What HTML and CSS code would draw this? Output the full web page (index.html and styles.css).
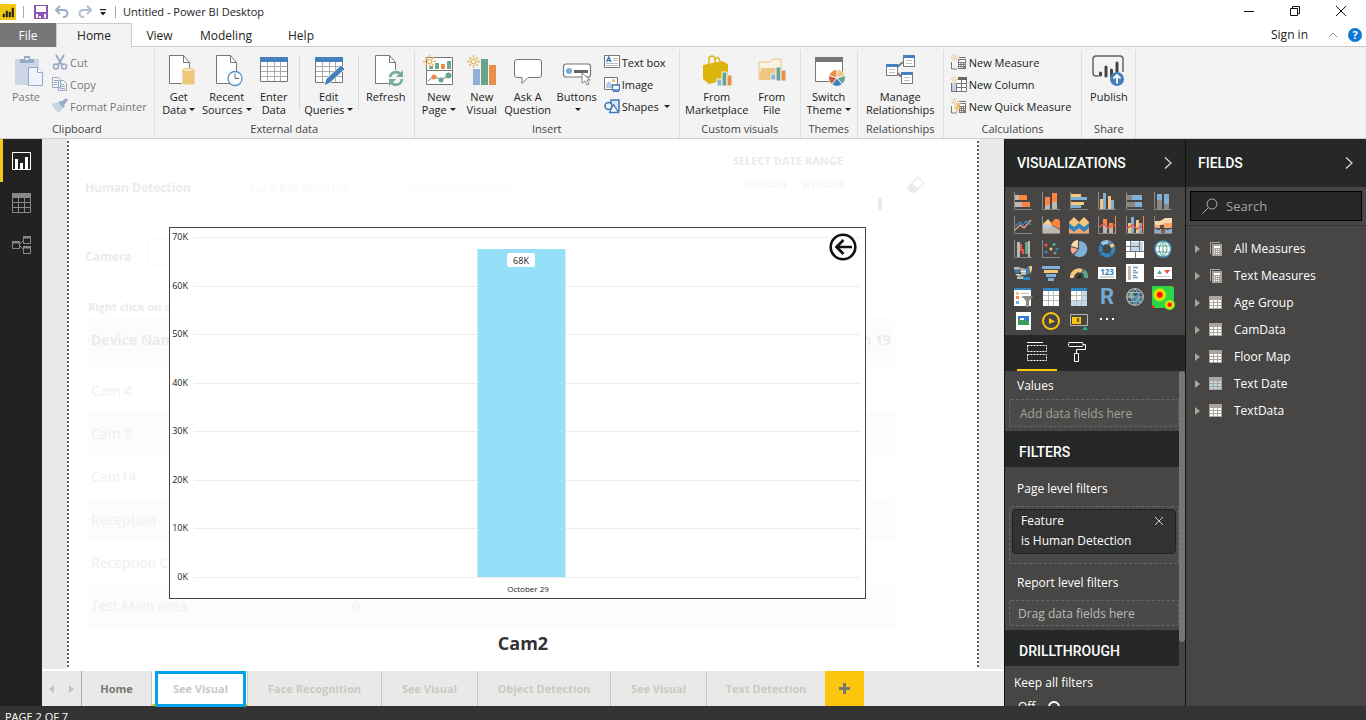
FILE: index.html
```html
<!DOCTYPE html>
<html lang="en">
<head>
<meta charset="utf-8">
<title>Untitled - Power BI Desktop</title>
<link rel="stylesheet" href="styles.css">
</head>
<body>
<svg class="defs" aria-hidden="true">
  <symbol id="spark" viewBox="0 0 12 12"><path d="M6 0v3M6 9v3M0 6h3M9 6h3M2 2l2 2M8 8l2 2M10 2L8 4M4 8l-2 2" stroke="#e8b96a" stroke-width="1.3"/><circle cx="6" cy="6" r="2" fill="#fff" stroke="#e8b96a" stroke-width="1.2"/></symbol>
  <symbol id="page" viewBox="0 0 22 30"><path d="M.5.5h14l6 7v21h-20z" fill="#fff" stroke="#777"/><path d="M14.500.5v7h6" fill="none" stroke="#777"/></symbol>
  <symbol id="f-table" viewBox="0 0 13 13"><path d="M0 0h13v13H0z" fill="#a9a59e"/><path d="M1 4h3v2H1zM5 4h3v2H5zM9 4h3v2H9zM1 7h3v2H1zM5 7h3v2H5zM9 7h3v2H9zM1 10h3v2H1zM5 10h3v2H5zM9 10h3v2H9z" fill="currentColor"/></symbol>
  <symbol id="f-calc" viewBox="0 0 13 15"><path d="M1.500 13V1.500H11" fill="none" stroke="#a9a59e"/><path d="M3 3h10v12H3z" fill="#a9a59e"/><path d="M5 5h6v2H5zM5 8h1v1H5zM7 8h1v1H7zM9 8h1v1H9zM5 10h1v1H5zM7 10h1v1H7zM9 10h1v1H9zM5 12h1v1H5zM7 12h1v1H7zM9 12h1v1H9z" fill="#fff"/></symbol>
  <symbol id="chev" viewBox="0 0 8 12"><path d="M1 .5l6 5.500-6 5.500" fill="none" stroke="#ddd" stroke-width="1.200"/></symbol>
</svg>
<div class="app">
  <header class="titlebar">
    <svg class="logo" width="16" height="16" viewBox="0 0 16 16"><path d="M0 0h16v16H0z" fill="#f2c811"/><path d="M3 13v-3h1.500v3zM6 13V7h1.500v6zM9 13V8h1.500v5zM12 13V4h1.500v9z" fill="#222" stroke="#222" stroke-width=".6"/></svg>
    <span class="tdiv"></span>
    <button class="plain save" aria-label="Save"><svg width="14" height="14" viewBox="0 0 14 14"><path d="M0 0h14v14H0z" fill="#8e56b0"/><path d="M2 1h10v6H2zM2 9h10v4H2z" fill="#fff"/><path d="M4 9h6v5H4z" fill="#8e56b0"/><path d="M5 11h2v2H5z" fill="#fff"/></svg></button>
    <button class="plain undo" aria-label="Undo"><svg width="15" height="13" viewBox="0 0 15 13"><path d="M1 5h8a3.500 3.500 0 0 1 0 7H8M5 .8L1 5l4 4" fill="none" stroke="#9ab0ca" stroke-width="2"/></svg></button>
    <button class="plain redo" aria-label="Redo"><svg width="15" height="13" viewBox="0 0 15 13"><path d="M14 5H6a3.500 3.500 0 0 0 0 7h1M10 .8L14 5l-4 4" fill="none" stroke="#afbfd3" stroke-width="2"/></svg></button>
    <button class="plain more" aria-label="Customize toolbar"><svg width="8" height="8" viewBox="0 0 8 8"><path d="M1 1h6v1.300H1zM1 4h6L4 7.500z" fill="#222"/></svg></button>
    <span class="tdiv"></span>
    <h1 class="doc">Untitled - Power BI Desktop</h1>
    <div class="win">
      <button class="plain" aria-label="Minimize"><svg width="12" height="12" viewBox="0 0 12 12"><path d="M1 6.500h10" stroke="#111"/></svg></button>
      <button class="plain" aria-label="Restore"><svg width="12" height="12" viewBox="0 0 12 12"><path d="M1.500 3.500h7v7h-7zM3.500 3V1.500h7v7H9" fill="none" stroke="#111"/></svg></button>
      <button class="plain" aria-label="Close"><svg width="12" height="12" viewBox="0 0 12 12"><path d="M1 1l10 10M11 1L1 11" stroke="#111"/></svg></button>
    </div>
  </header>

  <nav class="menu">
    <button class="mtab file">File</button>
    <button class="mtab home">Home</button>
    <button class="mtab view">View</button>
    <button class="mtab modeling">Modeling</button>
    <button class="mtab help">Help</button>
    <div class="account">
      <a class="signin" href="#">Sign in</a>
      <svg width="10" height="6" viewBox="0 0 10 6"><path d="M1 5l4-4 4 4" fill="none" stroke="#888"/></svg>
      <button class="helpbtn" aria-label="Help topics">?</button>
    </div>
  </nav>

  <div class="ribbon">
    <section class="group">
      <div class="tools clip">
        <button class="big w-paste dim"><svg width="30" height="32" viewBox="-3 0 30 32"><path d="M1 4h24v26H1z" fill="#ccd6e6"/><path d="M6 4h4V1h6v3h4v4H6z" fill="#97a9c4"/><path d="M11.500 3h3v2h-3z" fill="#f3f3f3"/><path d="M14.500 12.500h9l5 5v13h-14z" fill="#eef4fc" stroke="#97a9c4"/><path d="M23.500 12.500v5h5" fill="#fff" stroke="#97a9c4"/></svg><span>Paste</span></button>
        <div class="smalls">
          <button class="small dim"><svg width="16" height="16" viewBox="0 0 16 16"><path d="M4 1l6 10M12 1L6 11" stroke="#97a9c4" stroke-width="2"/><circle cx="4" cy="12.500" r="2.500" fill="none" stroke="#97a9c4" stroke-width="1.500"/><circle cx="12" cy="12.500" r="2.500" fill="none" stroke="#97a9c4" stroke-width="1.500"/></svg>Cut</button>
          <button class="small dim"><svg width="16" height="16" viewBox="0 0 16 16"><path d="M.5 1.500h6l2 2v8h-8zM6.500 4.500h5l3 3v7h-8z" fill="#f3f3f3" stroke="#97a9c4"/><path d="M2 4.500h4M2 6.500h3M2 8.500h3M8 8.500h4M8 10.500h5M8 12.500h5" stroke="#97a9c4"/></svg>Copy</button>
          <button class="small dim"><svg width="16" height="16" viewBox="0 0 16 16"><path d="M0 6l6-2 5 6-4 5c-2-1-6-5-7-9z" fill="#c8d3e3"/><path d="M6 4l3-1 4 5-2 2z" fill="#97a9c4"/><path d="M9 4l5-4 2 2-4 5z" fill="#97a9c4"/></svg>Format Painter</button>
        </div>
      </div>
      <h2>Clipboard</h2>
    </section>
    <section class="group">
      <div class="tools external">
        <button class="big w48"><svg width="30" height="32" viewBox="-2 0 30 32"><use href="#page" x="3" y="0" width="22" height="30"/><path d="M16 14h13v16H16z" fill="#efc77c" stroke="#f3f3f3"/><ellipse cx="22.500" cy="15" rx="5.500" ry="1.800" fill="#f8e6c0" stroke="#e8b45c" stroke-width=".7"/></svg><span>Get<br>Data<i></i></span></button>
        <button class="big w48"><svg width="30" height="32" viewBox="-1 0 30 32"><use href="#page" x="3" y="0" width="22" height="30"/><circle cx="22" cy="23.500" r="7" fill="#fff" stroke="#5d8fc0" stroke-width="1.300"/><path d="M22 18.500v5h4" fill="none" stroke="#666"/></svg><span>Recent<br>Sources<i></i></span></button>
        <button class="big w46"><svg width="30" height="32" viewBox="0 0 30 32"><path d="M1.500 2.500h27v24h-27z" fill="#fff" stroke="#777"/><path d="M1 2h28v5H1z" fill="#4580bd"/><path d="M2 11.500h26M2 16.500h26M2 21.500h26M8.500 7v19M15.500 7v19M21.500 7v19" stroke="#aaa"/></svg><span>Enter<br>Data</span></button>
        <span class="vsep"></span>
        <button class="big w54"><svg width="30" height="32" viewBox="0 0 30 32"><path d="M1.500 2.500h27v25h-27z" fill="#fff" stroke="#777"/><path d="M1 2h28v5H1z" fill="#4580bd"/><path d="M2 11.500h26M2 16.500h26M2 21.500h26M8.500 7v20M15.500 7v20M21.500 7v20" stroke="#aaa"/><path d="M10 31l2-7L27 10l4 4-15 14z" fill="#4580bd" stroke="#f3f3f3"/></svg><span>Edit<br>Queries<i></i></span></button>
        <span class="vsep"></span>
        <button class="big w50"><svg width="30" height="32" viewBox="-1 0 30 32"><use href="#page" x="3" y="0" width="22" height="30"/><circle cx="24" cy="23" r="8" fill="#f3f3f3"/><path d="M18 22a6 6 0 0 1 11-2M30 24a6 6 0 0 1-11 3" fill="none" stroke="#74ad98" stroke-width="2.600"/><path d="M31 15v7h-7zM17 31v-7h7z" fill="#74ad98"/></svg><span>Refresh</span></button>
      </div>
      <h2>External data</h2>
    </section>
    <section class="group">
      <div class="tools insert">
        <button class="big w44"><svg width="32" height="32" viewBox="0 0 32 32"><path d="M3.500 2.500h26v27h-26zM4 15.500h25" fill="#fff" stroke="#777"/><path d="M12 8h4v6h-4zM24 6h4v8h-4zM6 11h4v3H6z" fill="#6ba58d"/><path d="M18 9h4v5h-4z" fill="#e98b45"/><path d="M5 26l6-5 7 4 8-5" fill="none" stroke="#777"/><circle cx="11" cy="22" r="2.500" fill="#e98b45"/><circle cx="18" cy="25" r="2.500" fill="#6ba58d"/><circle cx="25.500" cy="20.500" r="3" fill="#6ba58d"/><use href="#spark" x="0" y="0" width="13" height="13"/></svg><span>New<br>Page<i></i></span></button>
        <button class="big w42"><svg width="30" height="32" viewBox="0 0 30 32"><path d="M6 14h7v16H6z" fill="#8fb1d6"/><path d="M14 4h7v26h-7z" fill="#67a48c"/><path d="M22 10h7v20h-7z" fill="#e98e4b"/><use href="#spark" x="0" y="0" width="13" height="13"/></svg><span>New<br>Visual</span></button>
        <button class="big w50"><svg width="30" height="32" viewBox="0 0 30 32"><path d="M4 4.500h22a2.500 2.500 0 0 1 2.500 2.500v13a2.500 2.500 0 0 1-2.500 2.500H15l-6 6v-6H4A2.500 2.500 0 0 1 1.500 20V7A2.500 2.500 0 0 1 4 4.500z" fill="#fff" stroke="#777"/></svg><span>Ask A<br>Question</span></button>
        <button class="big w48"><svg width="30" height="32" viewBox="0 0 30 32"><rect x="1.500" y="9" width="27" height="13" rx="2.500" fill="#fff" stroke="#777" stroke-width="1.200"/><circle cx="7" cy="16" r="3" fill="#7cacd8"/><path d="M12 15h14v3H12z" fill="#666"/><path d="M20 18v10l3-2 2 4 2-1-2-4h3z" fill="#fff" stroke="#666" stroke-width=".8"/></svg><span>Buttons<br><i></i></span></button>
        <div class="smalls">
          <button class="small"><svg width="16" height="16" viewBox="0 0 16 16"><path d="M.5 1.500h15v12H.5z" fill="#fff" stroke="#777"/><path d="M9 4.500h5M9 6.500h5M2 9.500h12M2 11.500h12" stroke="#bbb"/><path d="M2.500 8L4.800 3 7 8M3.500 6.500h3" fill="none" stroke="#3f7ab8" stroke-width="1.400"/></svg>Text box</button>
          <button class="small"><svg width="16" height="16" viewBox="0 0 16 16"><path d="M.5 1.500h13v12H.5z" fill="#fff" stroke="#777"/><circle cx="9.500" cy="4.500" r="1.500" fill="#efb35f"/><path d="M2 12V8l3-3 3 3v4z" fill="#b9cbe0"/><path d="M8.500 9h7v5h-7z" fill="#fff" stroke="#3f7ab8" stroke-width="1.300"/><path d="M9 15.500h6" stroke="#3f7ab8"/></svg>Image</button>
          <button class="small"><svg width="16" height="16" viewBox="0 0 16 16"><path d="M7 2h8v11H7z" fill="#dbe7f3" stroke="#3f7ab8" stroke-width="1.500"/><circle cx="4.500" cy="8" r="3.500" fill="#f3f3f3" stroke="#3f7ab8" stroke-width="1.600"/><path d="M5.500 14.500l4-8 5 8z" fill="#fff" stroke="#3f7ab8" stroke-width="1.300"/></svg>Shapes<i></i></button>
        </div>
      </div>
      <h2>Insert</h2>
    </section>
    <section class="group">
      <div class="tools custom">
        <button class="big w70"><svg width="32" height="32" viewBox="0 0 32 32"><path d="M2 10l19-4 6 3v15L8 29l-6-5z" fill="#dcb40e"/><path d="M8 9V3q3-4 6 0v5M13 5q4-5 6 1" fill="none" stroke="#dcb40e" stroke-width="1.500"/><path d="M16 24h5v7h-5z" fill="#8fb1d6" stroke="#f3f3f3"/><path d="M21 17h5v14h-5z" fill="#67a48c" stroke="#f3f3f3"/><path d="M26 20h5v11h-5z" fill="#e98e4b" stroke="#f3f3f3"/></svg><span>From<br>Marketplace</span></button>
        <button class="big w40"><svg width="30" height="32" viewBox="0 0 30 32"><path d="M2 24V7h11l3-3h8v20z" fill="#faf3e4" stroke="#eac27f"/><path d="M4 13h21l-5 12H2z" fill="#eec583"/><path d="M14 19h5v6h-5z" fill="#8fb1d6" stroke="#f3f3f3"/><path d="M19 12h5v14h-5z" fill="#67a48c" stroke="#f3f3f3"/><path d="M24 15h5v11h-5z" fill="#e98e4b" stroke="#f3f3f3"/></svg><span>From<br>File</span></button>
      </div>
      <h2>Custom visuals</h2>
    </section>
    <section class="group">
      <div class="tools">
        <button class="big w56"><svg width="32" height="32" viewBox="0 0 32 32"><path d="M2.500 3.500h27v23h-27z" fill="#fff" stroke="#777"/><path d="M2 2h28v5H2z" fill="#777"/><circle cx="24" cy="23" r="8.500" fill="#f3f3f3"/><path d="M24 23V15a8 8 0 0 1 7.500 5.500z" fill="#efc77c"/><path d="M24 23l7.500-2.500A8 8 0 0 1 29 29z" fill="#67a48c"/><path d="M24 23l5 6a8 8 0 0 1-10 0z" fill="#4580bd"/><path d="M24 23l-5 6a8 8 0 0 1-2.500-8.500z" fill="#cf5b43"/><path d="M24 23l-7.500-2.500A8 8 0 0 1 24 15z" fill="#e98e4b"/><path d="M24 23v-8M24 23l7.500-2.500M24 23l5 6M24 23l-5 6M24 23l-7.500-2.500" stroke="#fff"/></svg><span>Switch<br>Theme<i></i></span></button>
      </div>
      <h2>Themes</h2>
    </section>
    <section class="group">
      <div class="tools">
        <button class="big w85"><svg width="32" height="32" viewBox="0 0 32 32"><path d="M12 13l7-6M12 17l6 5" stroke="#777" stroke-width="2"/><path d="M2.500 9.500h11v11h-11zM19.500.5h11v11h-11zM17.500 17.500h11v11h-11z" fill="#fff" stroke="#777"/><path d="M2 9h12v3H2zM19 0h12v3H19zM17 17h12v3H17z" fill="#4580bd"/><path d="M5 14.500h6M5 17.500h6M22 5.500h6M22 8.500h6M20 22.500h6M20 25.500h6" stroke="#bbb"/></svg><span>Manage<br>Relationships</span></button>
      </div>
      <h2>Relationships</h2>
    </section>
    <section class="group">
      <div class="tools calc">
        <div class="smalls">
          <button class="small"><svg width="16" height="16" viewBox="0 0 16 16"><path d="M.5 8v7H6M8 3.500h7" fill="none" stroke="#777"/><path d="M7 5h8v10H7z" fill="#777"/><path d="M8 6h6v2H8zM8 9h1.500v1H8zM10.500 9H12v1h-1.500zM13 9h1v1h-1zM8 11h1.500v1H8zM10.500 11H12v1h-1.500zM13 11h1v1h-1zM8 13h1.500v1H8zM10.500 13H12v1h-1.500z" fill="#fff"/><use href="#spark" width="7" height="7"/></svg>New Measure</button>
          <button class="small"><svg width="16" height="16" viewBox="0 0 16 16"><path d="M.5 1.500h15v14H.5z" fill="#fff" stroke="#777"/><path d="M1 5h4v10H1z" fill="#bdd3ea"/><path d="M7 1h9v3H7z" fill="#666"/><path d="M5.500 2v13M10.500 4v11M6 7.500h10M6 11.500h10" stroke="#777"/><path d="M0 0h7v7H0z" fill="#f3f3f3"/><use href="#spark" width="7" height="7"/></svg>New Column</button>
          <button class="small"><svg width="16" height="16" viewBox="0 0 16 16"><path d="M.5 8v7H6M8 3.500h7" fill="none" stroke="#777"/><path d="M8 5h7v10H8z" fill="#777"/><path d="M9 6h5v2H9zM9 9h1v1H9zM11 9h1v1h-1zM13 9h1v1h-1zM9 11h1v1H9zM11 11h1v1h-1zM13 11h1v1h-1zM9 13h1v1H9zM11 13h1v1h-1z" fill="#fff"/><path d="M6 5h4L8 9h2l-6 7 1-5H3z" fill="#eec583"/><use href="#spark" width="7" height="7"/></svg>New Quick Measure</button>
        </div>
      </div>
      <h2>Calculations</h2>
    </section>
    <section class="group">
      <div class="tools">
        <button class="big w53"><svg width="32" height="32" viewBox="1 0 32 32"><path d="M7 21H4Q1 21 1 18V4q0-3 3-3h24q3 0 3 3v13" fill="none" stroke="#666" stroke-width="1.500"/><path d="M8.500 18v2M14 12v9M19.500 15v6M25 8v9" stroke="#444" stroke-width="3" stroke-linecap="round"/><circle cx="25" cy="24" r="7" fill="#4580bd"/><path d="M25 28.500v-8M21.500 23.500L25 20l3.500 3.500" fill="none" stroke="#fff" stroke-width="1.800"/></svg><span>Publish</span></button>
      </div>
      <h2>Share</h2>
    </section>
  </div>

  <div class="main">
    <nav class="rail">
      <button class="railbtn on" aria-label="Report"><svg width="19" height="18" viewBox="0 0 19 18"><path d="M.5.5h18v17H.5z" fill="none" stroke="#fff"/><path d="M3 7h3v11H3zM8 11h3v7H8zM13 5h3v13h-3z" fill="#fff"/></svg></button>
      <button class="railbtn" aria-label="Data"><svg width="19" height="20" viewBox="0 0 19 20"><path d="M0 0h19v5H0z" fill="#888"/><path d="M.5.5h18v19H.5zM6.500 5v15M12.500 5v15M0 9.500h19M0 14.500h19" fill="none" stroke="#888"/></svg></button>
      <button class="railbtn" aria-label="Relationships"><svg width="19" height="18" viewBox="0 0 19 18"><path d="M.5 5.500h7v7h-7zM11.500.5h7v7h-7zM11.500 10.500h7v7h-7zM8 8l3-3M8 10l3 3" fill="none" stroke="#888"/><path d="M0 5h8v2.500H0zM11 0h8v2.500h-8zM11 10h8v2.500h-8z" fill="#888"/></svg></button>
    </nav>

    <main class="work">
      <div class="canvas">
        <div class="sheet">
          <span class="ghost g-human">Human Detection</span>
          <span class="ghost g-face">Face Recognition</span>
          <span class="ghost g-object">Object Detection</span>
          <div class="ghost g-range">
            <span class="rangehead">SELECT DATE RANGE</span>
            <span class="dates"><span>3/12/2018</span><span>3/19/2018</span></span>
            <span class="track"><span class="knob"></span></span>
          </div>
          <svg class="g-eraser" width="18" height="17" viewBox="0 0 18 17"><path d="M2 10L11 1l6 6-9 9H5l-4-4z" fill="#fff" stroke="#ebebeb" stroke-width="1.500"/><path d="M2 10l3-3 6 6-3 3H5l-4-4z" fill="#ebebeb"/></svg>
          <span class="g-line"></span>
          <span class="ghost g-camera">Camera</span>
          <span class="g-box"></span>
          <span class="ghost g-right">Right click on a</span>
          <table class="ghost g-table">
            <tr><th>Device Nam</th><th class="num">n 19</th></tr>
            <tr><td>Cam 4</td><td></td></tr>
            <tr><td>Cam 8</td><td></td></tr>
            <tr><td>Cam14</td><td></td></tr>
            <tr><td>Reception</td><td></td></tr>
            <tr><td>Reception C</td><td></td></tr>
            <tr><td>Test Main area</td><td class="six">6</td></tr>
          </table>
          <div class="chart">
            <svg class="plot" viewBox="0 0 695 370" role="img" aria-label="68K on October 29">
              <path class="grid" d="M24 9.500h667M24 58.500h667M24 106.500h667M24 155.500h667M24 203.500h667M24 252.500h667M24 300.500h667M24 349.500h667"/>
              <path class="bar" d="M307.500 21h88v328h-88z"/>
              <rect class="tag" x="337" y="25" width="28" height="14" rx="2"/>
              <text class="mid" x="351" y="36">68K</text>
              <g class="axis">
                <text x="18" y="12">70K</text><text x="18" y="61">60K</text><text x="18" y="109">50K</text><text x="18" y="158">40K</text>
                <text x="18" y="206">30K</text><text x="18" y="255">20K</text><text x="18" y="303">10K</text><text x="18" y="352">0K</text>
              </g>
              <text class="mid date" x="358" y="364">October 29</text>
            </svg>
            <button class="back" aria-label="Back"><svg width="28" height="28" viewBox="0 0 28 28"><circle cx="14" cy="14" r="12.300" fill="#fff" stroke="#111" stroke-width="2.600"/><path d="M23 14H8M14.500 7L7.500 14l7 7" fill="none" stroke="#111" stroke-width="2.700"/></svg></button>
          </div>
          <h2 class="cam">Cam2</h2>
        </div>
      </div>
      <div class="pages">
        <div class="arrows"><button class="plain" aria-label="Previous page"><svg width="5" height="8" viewBox="0 0 5 8"><path d="M5 0v8L0 4z" fill="#c4c2be"/></svg></button><button class="plain" aria-label="Next page"><svg width="5" height="8" viewBox="0 0 5 8"><path d="M0 0v8l5-4z" fill="#c4c2be"/></svg></button></div>
        <button class="ptab p-home">Home</button>
        <button class="ptab p-active"><span>See Visual</span></button>
        <button class="ptab p-face">Face Recognition</button>
        <button class="ptab p-see">See Visual</button>
        <button class="ptab p-object">Object Detection</button>
        <button class="ptab p-see">See Visual</button>
        <button class="ptab p-text">Text Detection</button>
        <button class="padd" aria-label="New page"><svg width="11" height="11" viewBox="0 0 11 11"><path d="M4 0h3v4h4v3H7v4H4V7H0V4h4z" fill="#777"/></svg></button>
      </div>
    </main>

    <aside class="vis">
      <header class="phead"><h2>VISUALIZATIONS</h2><svg width="8" height="12"><use href="#chev"/></svg></header>
      <div class="gallery">
        <button aria-label="Stacked bar chart"><svg viewBox="0 0 18 18"><path d="M.5 0v17.500H18" class="ax"/><path d="M1 3h4v5H1zM1 10h7v5H1z" fill="#bdb9b2"/><path d="M5 3h8v5H5zM8 10h8v5H8z" fill="#fd8540"/></svg></button>
        <button aria-label="Stacked column chart"><svg viewBox="0 0 18 18"><path d="M.5 0v17.500H18" class="ax"/><path d="M3 5h5v8H3zM10 1h5v9h-5z" fill="#fd8540"/><path d="M3 13h5v4H3zM10 10h5v7h-5z" fill="#bdb9b2"/></svg></button>
        <button aria-label="Clustered bar chart"><svg viewBox="0 0 18 18"><path d="M.5 0v17.500H18" class="ax"/><path d="M1 2h10v3H1zM1 10h13v3H1z" fill="#f7c77e"/><path d="M1 5h16v3H1zM1 13h10v3H1z" fill="#7eb0d8"/></svg></button>
        <button aria-label="Clustered column chart"><svg viewBox="0 0 18 18"><path d="M.5 0v17.500H18" class="ax"/><path d="M2 7h3v10H2zM10 4h3v13h-3z" fill="#f7c77e"/><path d="M5 1h3v16H5zM13 8h3v9h-3z" fill="#7eb0d8"/></svg></button>
        <button aria-label="100% stacked bar chart"><svg viewBox="0 0 18 18"><path d="M.5 0v17.500H18" class="ax"/><path d="M1 3h5v5H1zM1 10h8v5H1z" fill="#8c8883"/><path d="M6 3h10v5H6zM9 10h7v5H9z" fill="#7eb0d8"/></svg></button>
        <button aria-label="100% stacked column chart"><svg viewBox="0 0 18 18"><path d="M.5 0v17.500H18" class="ax"/><path d="M3 2h5v10H3zM10 2h5v10h-5z" fill="#7eb0d8"/><path d="M3 8h5v9H3zM10 12h5v5h-5z" fill="#8c8883"/></svg></button>

        <button aria-label="Line chart"><svg viewBox="0 0 18 18"><path d="M.5 0v17.500H18" class="ax"/><path d="M1 14l5-5 4 3 7-8" fill="none" stroke="#fba893" stroke-width="1.200"/><path d="M1 10l5-4 3 3 3-4 5 4" fill="none" stroke="#3c8dc5" stroke-width="1.200"/></svg></button>
        <button aria-label="Area chart"><svg viewBox="0 0 18 18"><path d="M1 8l5-5 4 5v9H1z" fill="#f8d08f"/><path d="M8 8l5-5h3l2 2v8z" fill="#fd8540"/><path d="M1 9l5 2 5-1 7 4v3H1z" fill="#bdb9b2"/><path d="M1 10q4-4 8 0q-3 4-8 2z" fill="#b9cbe0"/><path d="M.5 0v17.500H18" class="ax"/></svg></button>
        <button class="wide" aria-label="Stacked area chart"><svg viewBox="0 0 20 18"><path d="M0 6l5-5 5 5 5-5 5 5v12H0z" fill="#f7c77e"/><path d="M0 7l5 4 5-4 5 4 5-4v11H0z" fill="#3184bd"/><path d="M0 17v-5l5 4 5-4 5 4 5-4v5z" fill="#fda468"/><path d="M0 17.500h20" stroke="#8c8883"/></svg></button>
        <button aria-label="Line and stacked column chart"><svg viewBox="0 0 18 18"><path d="M5 3h4v5H5zM11 7h4v3h-4z" fill="#fd8540"/><path d="M5 8h4v9H5zM11 10h4v7h-4z" fill="#bdb9b2"/><path d="M1 11l5-3 4 4 7-3" fill="none" stroke="#f05540" stroke-width="1.500"/><path d="M.5 0v17.500H18" class="ax"/><path d="M17.500 0v17" stroke="#fd8540"/></svg></button>
        <button aria-label="Line and clustered column chart"><svg viewBox="0 0 18 18"><path d="M2 7h3v10H2zM10 4h3v13h-3z" fill="#f7c77e"/><path d="M5 1h3v16H5zM13 7h3v10h-3z" fill="#7eb0d8"/><path d="M1 12l6-3 4 4 6-4" fill="none" stroke="#f05540" stroke-width="1.500"/><path d="M.5 0v17.500H18" class="ax"/><path d="M17.500 0v17" stroke="#fd8540"/></svg></button>
        <button aria-label="Ribbon chart"><svg viewBox="0 0 18 18"><path d="M1 5h5l5-3h7v6L1 10z" fill="#f8dcae"/><path d="M1 9h5l5-2h7v5H1z" fill="#fda468"/><path d="M1 13h17v4H1z" fill="#7eb0d8"/><path d="M6 9h4v3H6zM12 12h3v2h-3zM3 12h3v2H3z" fill="#555"/><path d="M7 13h4v4H7z" fill="#9a5640"/><path d="M.5 0v17.500H18" class="ax"/></svg></button>

        <button aria-label="Waterfall chart"><svg viewBox="0 0 18 18"><path d="M3 2h3v15H3zM14 1h2v16h-2z" fill="#bdb9b2"/><path d="M6 4h2v7H6zM8 9h2v5H8z" fill="#f05540"/><path d="M11 2h3v12h-3z" fill="#5ea68c"/><path d="M.5 0v17.500H18" class="ax"/></svg></button>
        <button aria-label="Scatter chart"><svg viewBox="0 0 18 18"><path d="M.5 0v17.500H18" class="ax"/><g><circle cx="4" cy="5" r="1.600" fill="#f05540"/><circle cx="12" cy="4.500" r="1.600" fill="#5ea68c"/><circle cx="9" cy="9" r="1.600" fill="#f7c77e"/><circle cx="4" cy="12" r="1.600" fill="#3184bd"/><circle cx="15" cy="9" r="1.600" fill="#3184bd"/><circle cx="13" cy="13" r="1.600" fill="#8c8883"/></g></svg></button>
        <button aria-label="Pie chart"><svg viewBox="0 0 18 18"><path d="M9 9V1a8 8 0 1 1-5 14z" fill="#7eb0d8"/><path d="M8 8V0a8 8 0 0 0-7 6z" fill="#f8dcae"/><path d="M8 9L1 7q-1 5 2 7z" fill="#fba893"/></svg></button>
        <button aria-label="Donut chart"><svg viewBox="0 0 18 18"><circle cx="9" cy="9" r="6.500" fill="none" stroke="#3184bd" stroke-width="4"/><path d="M4 4a6.500 6.500 0 0 1 8-1" fill="none" stroke="#9ec4e4" stroke-width="4"/><path d="M13 4l2 3" stroke="#f7c77e" stroke-width="4"/><path d="M11 0v5M2 5l4 2M2 13l4-2M14 16l-2-3" stroke="#474644"/></svg></button>
        <button aria-label="Treemap"><svg viewBox="0 0 18 18"><path d="M0 1h18v17H0z" fill="#fff"/><path d="M5 2h8v5H5zM13 2h4v9h-4zM5 7h8v4H5z" fill="#c5d8ea"/><path d="M4.500 1v10M13.500 1v10M4 6.500h9M0 11.500h18M9.500 12v6M0 6.500h4" stroke="#777"/></svg></button>
        <button aria-label="Map"><svg viewBox="0 0 18 18"><circle cx="9" cy="9" r="8" fill="#fff" stroke="#3e94bd" stroke-width="1.500"/><path d="M9 1v16M2 6h14M2 12h14M9 1q-8 8 0 16q8-8 0-16" fill="none" stroke="#5ea68c"/></svg></button>

        <button aria-label="Filled map"><svg viewBox="0 0 18 18"><path d="M0 3h6v3H0zM7 8h5v3H7zM3 12h7v3H3z" fill="#bdb9b2"/><path d="M0 6h6l-1 3H1zM12 4l3-2v8l-3 1zM9 13h7v3H9z" fill="#3184bd"/><path d="M15 2h3v4l-2 4z" fill="#f7c77e"/><path d="M6 4l6 1v3H6zM1 10h6v2H4z" fill="#eee"/><path d="M0 6h12M6 3v8M3 12h13" stroke="#555" stroke-width=".8"/></svg></button>
        <button aria-label="Funnel"><svg viewBox="0 0 18 18"><path d="M0 2h18v3H0zM4 10h10v3H4z" fill="#7eb0d8"/><path d="M2 6h14v3H2z" fill="#f7c77e"/><path d="M6 14h6v3H6z" fill="#7eb0d8"/></svg></button>
        <button aria-label="Gauge"><svg viewBox="0 0 18 18"><path d="M2 14a7 7 0 0 1 10-7" fill="none" stroke="#f7c77e" stroke-width="4"/><path d="M13 7a7 7 0 0 1 3 7" fill="none" stroke="#5ea68c" stroke-width="4"/><path d="M6 14l5-4v4z" fill="#222"/></svg></button>
        <button aria-label="Card"><svg viewBox="0 0 18 18"><path d="M0 3h18v12H0z" fill="#fff"/><path d="M1.500 13h15" stroke="#aaa"/><text x="9" y="10.500" class="cardnum">123</text></svg></button>
        <button aria-label="Multi-row card"><svg viewBox="0 0 18 18"><path d="M0 0h18v18H0z" fill="#fff"/><path d="M2 2h3v14H2z" fill="#bdb9b2"/><path d="M7 3.500h5M7 8.500h5M7 13.500h5" stroke="#7eb0d8" stroke-width="2"/><path d="M7 6.500h3M7 11.500h3" stroke="#888"/></svg></button>
        <button aria-label="KPI"><svg viewBox="0 0 18 18"><path d="M0 3h18v12H0z" fill="#fff"/><path d="M3 10l2.500-4L8 10z" fill="#5ea68c"/><path d="M10 6h6l-3 4z" fill="#f05540"/><path d="M2 12.500h14" stroke="#ccc"/></svg></button>

        <button aria-label="Slicer"><svg viewBox="0 0 18 18"><path d="M0 0h17v18H0z" fill="#fff"/><path d="M0 0h17v2H0z" fill="#3184bd"/><path d="M2 4h3v3H2z" fill="#f7c77e"/><path d="M2 8h3v3H2z" fill="#fd8540"/><path d="M2 13h3v3H2z" fill="#7eb0d8"/><path d="M7 5.500h8M7 9.500h3" stroke="#bbb"/><path d="M8 8h11l-4 5v6h-3v-6z" fill="#8c8883"/></svg></button>
        <button aria-label="Table"><svg viewBox="0 0 18 18"><path d="M1 0h16v18H1z" fill="#fff"/><path d="M1 0h16v3H1z" fill="#3184bd"/><path d="M1 7.500h16M1 12.500h16M6.500 3v15M11.500 3v15" stroke="#bbb"/></svg></button>
        <button aria-label="Matrix"><svg viewBox="0 0 18 18"><path d="M1 0h16v18H1z" fill="#fff"/><path d="M11 3h6v15h-6zM1 13h16v5H1z" fill="#c5d8ea"/><path d="M1 0h16v3H1z" fill="#3184bd"/><path d="M1 7.500h16M1 12.500h16M6.500 3v15M11.500 3v15" stroke="#bbb"/></svg></button>
        <button class="rletter" aria-label="R script visual">R</button>
        <button aria-label="ArcGIS map"><svg viewBox="0 0 18 18"><circle cx="9" cy="9" r="8.300" fill="#42576a" stroke="#bdb9b2" stroke-width="1.300"/><path d="M3 5h4l2 4-3 2-4-2zM10 10l5 1-3 4-3-2z" fill="#5ea68c"/><path d="M9 1q-5 4-4 8t4 8M9 1q5 4 4 8t-4 8M1 9h16M3 4.500h12M3 13.500h12" fill="none" stroke="#bdb9b2"/><path d="M4 15L15 4M9 16l7-7" stroke="#4c9bd0" stroke-width="1.500"/></svg></button>
        <button class="heat" aria-label="Heatmap"><svg viewBox="0 0 20 20"><defs><radialGradient id="heat"><stop offset="0" stop-color="#f00"/><stop offset=".3" stop-color="#f20"/><stop offset=".55" stop-color="#fe0"/><stop offset="1" stop-color="#2bd546"/></radialGradient></defs><path d="M0 0h20v20H0z" fill="#2bd546"/><circle cx="7" cy="8" r="7" fill="url(#heat)"/><circle cx="16" cy="17" r="5" fill="url(#heat)"/><path d="M0 18h2v2H0zM18 0h2v1h-2z" fill="#f20"/></svg></button>

        <button aria-label="Image visual"><svg viewBox="0 0 18 18"><path d="M2 0h15v18H2z" fill="#fff"/><path d="M4 4h11v9H4z" fill="#2f7fd8"/><path d="M4 8q3-3 5 0q4-1 6 2v3H4z" fill="#3a9d58"/><path d="M6 6h4v2H6z" fill="#e6f2ff"/></svg></button>
        <button aria-label="Play axis"><svg viewBox="0 0 18 18"><circle cx="9" cy="9" r="8" fill="none" stroke="#fcc60d" stroke-width="2"/><path d="M7 6l6 3.500L7 12z" fill="#fcc60d"/></svg></button>
        <button aria-label="Scroller"><svg viewBox="0 0 18 18"><path d="M.5 2.500h17v11H.5z" fill="none" stroke="#bdb9b2"/><path d="M2 5h9v7H2z" fill="#fcc60d"/><path d="M7 6l2 4M9 6l-2 4M13.500 5v7" stroke="#444"/><path d="M12 18l3-4 3 4z" fill="#16b39a"/></svg></button>
        <button aria-label="More visuals"><svg viewBox="0 0 18 18"><path d="M2 6h2v2H2zM8 6h2v2H8zM14 6h2v2h-2z" fill="#fff"/></svg></button>
      </div>
      <div class="wells">
        <button class="well on" aria-label="Fields"><svg width="20" height="20" viewBox="0 0 20 20"><path d="M0 .5h16" stroke="#fff"/><path d="M.5 3.500h19v6H.5zM.5 12.500h19v6H.5z" fill="none" stroke="#fff" stroke-dasharray="2 1"/></svg></button>
        <button class="well" aria-label="Format"><svg width="18" height="20" viewBox="0 0 18 20"><path d="M1 .5h13a1 1 0 0 1 1 1v2a1 1 0 0 1-1 1H1.500a1 1 0 0 1-1-1v-2a1 1 0 0 1 1-1zM15 2.500h2.500v5h-9V11M6.500 11.500h4v8h-4z" fill="none" stroke="#fff"/></svg></button>
      </div>
      <div class="pane">
        <div class="panebody">
          <h3 class="lead">Values</h3>
          <div class="drop">Add data fields here</div>
          <h2 class="band">FILTERS</h2>
          <h3>Page level filters</h3>
          <div class="dropwrap"><div class="card"><div>Feature<br>is Human Detection</div><button class="plain" aria-label="Remove filter"><svg width="10" height="10" viewBox="0 0 10 10"><path d="M1 1l8 8M9 1L1 9" stroke="#ccc"/></svg></button></div></div>
          <h3>Report level filters</h3>
          <div class="drop low">Drag data fields here</div>
          <h2 class="band">DRILLTHROUGH</h2>
          <h3 class="keep">Keep all filters</h3>
          <label class="off"><span>Off</span><input type="checkbox"></label>
        </div>
        <div class="scroll"></div>
      </div>
    </aside>

    <aside class="fields">
      <header class="phead"><h2>FIELDS</h2><svg width="8" height="12"><use href="#chev"/></svg></header>
      <div class="searchrow"><label class="search"><svg width="16" height="16" viewBox="0 0 16 16"><circle cx="10" cy="6" r="5" fill="none" stroke="#aaa"/><path d="M6.500 9.500L.5 15.500" stroke="#aaa"/></svg><input type="text" placeholder="Search" aria-label="Search"></label></div>
      <ul class="tree">
        <li><button><i></i><svg width="13" height="15"><use href="#f-calc"/></svg>All Measures</button></li>
        <li><button><i></i><svg width="13" height="15"><use href="#f-calc"/></svg>Text Measures</button></li>
        <li><button><i></i><svg width="13" height="13"><use href="#f-table"/></svg>Age Group</button></li>
        <li><button><i></i><svg width="13" height="13"><use href="#f-table"/></svg>CamData</button></li>
        <li><button><i></i><svg width="13" height="13"><use href="#f-table"/></svg>Floor Map</button></li>
        <li><button><i></i><svg class="blue" width="13" height="13"><use href="#f-table"/></svg>Text Date</button></li>
        <li><button><i></i><svg width="13" height="13"><use href="#f-table"/></svg>TextData</button></li>
      </ul>
    </aside>
  </div>
  <footer class="status">PAGE 2 OF 7</footer>
</div>
</body>
</html>
```
FILE: styles.css
```css
* { box-sizing: border-box; }
body { margin: 0; font: 12px/13px "Open Sans", "Noto Sans", sans-serif; color: #222; }
button { font: inherit; color: inherit; background: none; border: 0; padding: 0; margin: 0; }
h1, h2, h3 { margin: 0; font: inherit; }
svg { display: block; flex: none; }
.defs { position: absolute; width: 0; height: 0; }
.app { display: flex; flex-direction: column; height: 100vh; overflow: hidden; background: #fff; }

.titlebar { display: flex; align-items: center; height: 23px; flex: none; }
.tdiv { width: 1px; height: 12px; background: #aaa; margin: 0 7px; }
.save { margin-left: 3px; }
.undo, .redo { margin-left: 7px; }
.more { margin: 0 1px 0 7px; }
.doc { white-space: nowrap; font-size: 11px; }
.win { display: flex; gap: 34px; margin: 0 19px 2px auto; }

.menu { display: flex; height: 24px; flex: none; border-bottom: 1px solid #ccc; }
.mtab { display: flex; align-items: center; justify-content: center; height: 24px; }
.file { width: 56px; background: #777; color: #fff; }
.home { width: 76px; background: #f3f3f3; border: 1px solid #ccc; border-bottom: 0; }
.view { width: 55px; }
.modeling { width: 78px; }
.help { width: 72px; }
.account { display: flex; align-items: center; margin-left: auto; padding-right: 4px; }
.signin { color: #222; text-decoration: none; margin-right: 20px; }
.helpbtn { width: 14px; height: 14px; margin-left: 10px; border-radius: 50%; background: #0e79d6; color: #fff; font-weight: 700; font-size: 11px; line-height: 14px; }

.ribbon { display: flex; height: 92px; flex: none; background: #f3f3f3; border-bottom: 1px solid #ccc; padding-top: 3px; font-size: 11px; }
.group { display: flex; flex-direction: column; justify-content: space-between; padding-bottom: 2px; border-right: 1px solid #dfdfdf; }
.group h2 { text-align: center; color: #444; white-space: nowrap; line-height: 14px; }
.tools { display: flex; }
.external { padding-right: 3px; }
.insert { padding: 0 4px 0 2px; }
.insert .smalls { margin-left: 3px; width: 71px; }
.custom { padding: 0 8px 0 2px; }
.clip { padding-right: 7px; }
.calc { padding: 0 10px 0 7px; }
.big { display: flex; flex-direction: column; align-items: center; padding-top: 5px; white-space: nowrap; line-height: 13px; }
.big svg { margin-bottom: 3px; overflow: visible; }
.big span { display: block; text-align: center; }
.big i, .small i { display: inline-block; border: 3px solid transparent; border-top: 3px solid #222; border-bottom: 0; margin-left: 3px; vertical-align: 3px; }
.dim { color: #777; }
.w-paste { width: 52px; }
.w40 { width: 40px; } .w42 { width: 42px; } .w44 { width: 44px; } .w46 { width: 46px; }
.w48 { width: 48px; } .w50 { width: 50px; } .w53 { width: 53px; } .w54 { width: 54px; }
.w56 { width: 56px; } .w70 { width: 70px; } .w85 { width: 85px; }
.vsep { width: 1px; height: 54px; margin: 6px 2px 0; background: #dadada; }
.smalls { display: flex; flex-direction: column; padding: 1px 0 0; }
.small { display: flex; align-items: center; gap: 2px; height: 22px; white-space: nowrap; }

.main { display: flex; flex: 1; min-height: 0; }
.rail { width: 42px; background: #222; flex: none; }
.railbtn { display: flex; align-items: center; width: 42px; height: 42px; padding-left: 12px; }
.railbtn.on { border-left: 3px solid #f2c811; padding-left: 9px; height: 43px; }
.work { flex: 1; min-width: 0; display: flex; flex-direction: column; }
.canvas { flex: 1; min-height: 0; background: #eae9e7; padding: 0 25px; overflow: hidden; }
.sheet { position: relative; height: 100%; background: repeating-linear-gradient(#fff 0 2px, #605e5a 2px 4px) 0 0 / 2px 100% no-repeat, repeating-linear-gradient(#fff 0 2px, #605e5a 2px 4px) 100% 0 / 2px 100% no-repeat, #fff; }
.ghost { position: absolute; color: #ecebe9; font-weight: 700; white-space: nowrap; }
.g-human { left: 18px; top: 42px; }
.g-face { left: 182px; top: 42px; color: #faf9f9; }
.g-object { left: 341px; top: 42px; color: #fcfcfc; }
.g-range { right: 97px; top: 15px; width: 149px; font-size: 11px; display: flex; flex-direction: column; }
.dates { display: flex; gap: 4px; margin: 8px 0 0 6px; color: #f0efee; font-size: 9px; font-weight: 400; }
.dates span { border: 1px solid #fcfcfc; padding: 2px 4px; width: 54px; height: 19px; }
.track { display: flex; align-items: center; justify-content: flex-end; height: 13px; margin: 3px 0 0 6px; background: linear-gradient(#fafafa, #fafafa) 0 50% / 100% 1px no-repeat; }
.knob { width: 4px; height: 13px; border-radius: 2px; background: #ecebe9; }
.g-eraser { position: absolute; right: 54px; top: 37px; }
.g-line { position: absolute; left: 2px; right: 7px; top: 81px; border-top: 1px solid #fafafa; }
.g-camera { left: 18px; top: 111px; }
.g-box { position: absolute; left: 80px; top: 100px; width: 120px; height: 26px; border: 1px solid #f3fcfd; }
.g-right { left: 21px; top: 161px; font-size: 11px; }
.g-table { left: 20px; width: calc(100% - 104px); top: 179px; border-collapse: collapse; color: #f0efee; font-size: 14px; }
.g-table td, .g-table th { height: 43px; padding: 0 4px; text-align: left; font-weight: 400; }
.g-table th { height: 51px; padding-bottom: 8px; font-weight: 700; color: #ecebe9; }
.g-table th:first-child { width: 108px; }
.g-table .num { text-align: right; }
.g-table .six { padding-left: 157px; }
.g-table tr:nth-child(odd) { background: #fcfcfc; }
.chart { position: absolute; left: 102px; right: 113px; top: 88px; background: #fff; border: 1px solid #444; }
.plot { width: 100%; height: auto; font-size: 9px; fill: #222; }
.grid { stroke: #eee; fill: none; }
.bar { fill: #95dff8; }
.tag { fill: #fff; }
.mid { text-anchor: middle; }
.date { font-size: 8px; }
.axis { text-anchor: end; }
.back { position: absolute; right: 8px; top: 5px; }
.cam { position: absolute; left: 0; right: 0; top: 492px; text-align: center; font-size: 18px; line-height: 24px; font-weight: 700; color: #333; }

.pages { display: flex; height: 37px; flex: none; border-top: 2px solid #fff; background: #eae9e7; font-size: 11px; font-weight: 700; color: #cbc9c5; }
.arrows { display: flex; width: 40px; align-items: center; gap: 15px; padding-left: 7px; border-right: 1px solid #aaa; }
.ptab { border-right: 1px solid #c8c6c2; white-space: nowrap; }
.p-home { width: 70px; color: #777; }
.p-active { display: flex; width: 96px; background: #fff; border-bottom: 2px solid #fcc60d; padding: 0 1px 0 3px; }
.p-active span { flex: 1; height: 36px; line-height: 30px; border: 3px solid #00a2e8; position: relative; background: #fff; }
.p-face { width: 134px; }
.p-see { width: 96px; }
.p-object { width: 133px; }
.p-text { width: 118px; border-right: 0; }
.padd { width: 39px; background: #fcc60d; display: flex; align-items: center; justify-content: center; }

.vis, .fields { width: 181px; background: #474644; color: #fff; display: flex; flex-direction: column; border-left: 1px solid #111; flex: none; }
.phead { height: 48px; flex: none; background: #252827; display: flex; align-items: center; justify-content: space-between; padding: 0 13px 0 12px; font: 500 14px/16px Roboto, sans-serif; }
.gallery { display: grid; grid-template-columns: repeat(6, 28px); grid-auto-rows: 24px; padding: 2px 0 2px 4px; height: 148px; flex: none; }
.gallery button { display: flex; align-items: center; justify-content: center; }
.gallery svg { width: 18px; height: 18px; overflow: visible; }
.gallery .wide svg { width: 20px; }
.gallery .heat svg { width: 22px; height: 22px; }
.ax { stroke: #8c8883; fill: none; }
.cardnum { font: 700 8px "Open Sans", sans-serif; fill: #3b80b5; text-anchor: middle; }
.gallery .rletter { font: 700 22px/24px Roboto, sans-serif; color: #75a9d3; }
.wells { height: 36px; flex: none; background: #252827; display: flex; padding-left: 12px; }
.well { width: 40px; display: flex; justify-content: center; align-items: center; border-bottom: 2px solid transparent; }
.well.on { border-color: #fcc60d; }
.pane { flex: 1; min-height: 0; overflow: hidden; display: flex; }
.panebody { flex: 1; min-width: 0; }
.panebody h3 { padding: 0 12px; line-height: 16px; margin: 14px 0 9px; }
.panebody h3.lead { margin: 7px 0 5px; }
.panebody h3.keep { margin: 9px 0 7px; padding: 0 9px; }
.drop, .dropwrap { margin: 0 0 0 4px; border: 1px dashed #686764; border-radius: 2px; background: #4b4a48; }
.drop { height: 28px; line-height: 28px; padding-left: 10px; color: #a3a19d; }
.drop.low { height: 26px; line-height: 26px; padding-left: 8px; color: #bbb; }
.drop + .band { margin-top: 4px; }
.band { height: 36px; background: #252827; padding: 0 14px; font: 500 14px/42px Roboto, sans-serif; }
.dropwrap { height: 58px; padding: 2px; }
.panebody .dropwrap + h3 { margin: 11px 0 9px; }
.card { display: flex; justify-content: space-between; align-items: flex-start; height: 45px; padding: 1px 11px 0 8px; line-height: 20px; background: #313332; border: 1px solid #222; border-radius: 4px; }
.card button { margin-top: 5px; }
.off { display: flex; align-items: center; padding-left: 13px; gap: 13px; line-height: 18px; }
.off input { appearance: none; margin: 0; width: 12px; height: 12px; border: 2px solid #fff; border-radius: 50%; }
.scroll { width: 6px; height: 271px; border-radius: 3px; background: #777674; }

.searchrow { padding: 4px; border-bottom: 1px solid #363534; }
.search { display: flex; align-items: center; gap: 8px; height: 30px; padding-left: 11px; background: #252827; border: 1px solid #000; }
.search input { flex: 1; min-width: 0; border: 0; outline: 0; padding: 0; background: none; color: #fff; font: inherit; font-size: 13px; }
.search input::placeholder { color: #a5a39f; opacity: 1; }
.tree { list-style: none; margin: 9px 0 0; padding: 0; }
.tree button { display: flex; align-items: center; height: 27px; padding-left: 9px; white-space: nowrap; }
.tree i { border: 4px solid transparent; border-left: 5px solid #a9a59e; border-right: 0; margin-right: 9px; }
.tree svg { margin-right: 12px; color: #fff; }
.tree .blue { color: #bcd6e8; }
.status { height: 14px; flex: none; overflow: hidden; background: #333; color: #fff; font-size: 11px; line-height: 21px; padding-left: 5px; }
```
